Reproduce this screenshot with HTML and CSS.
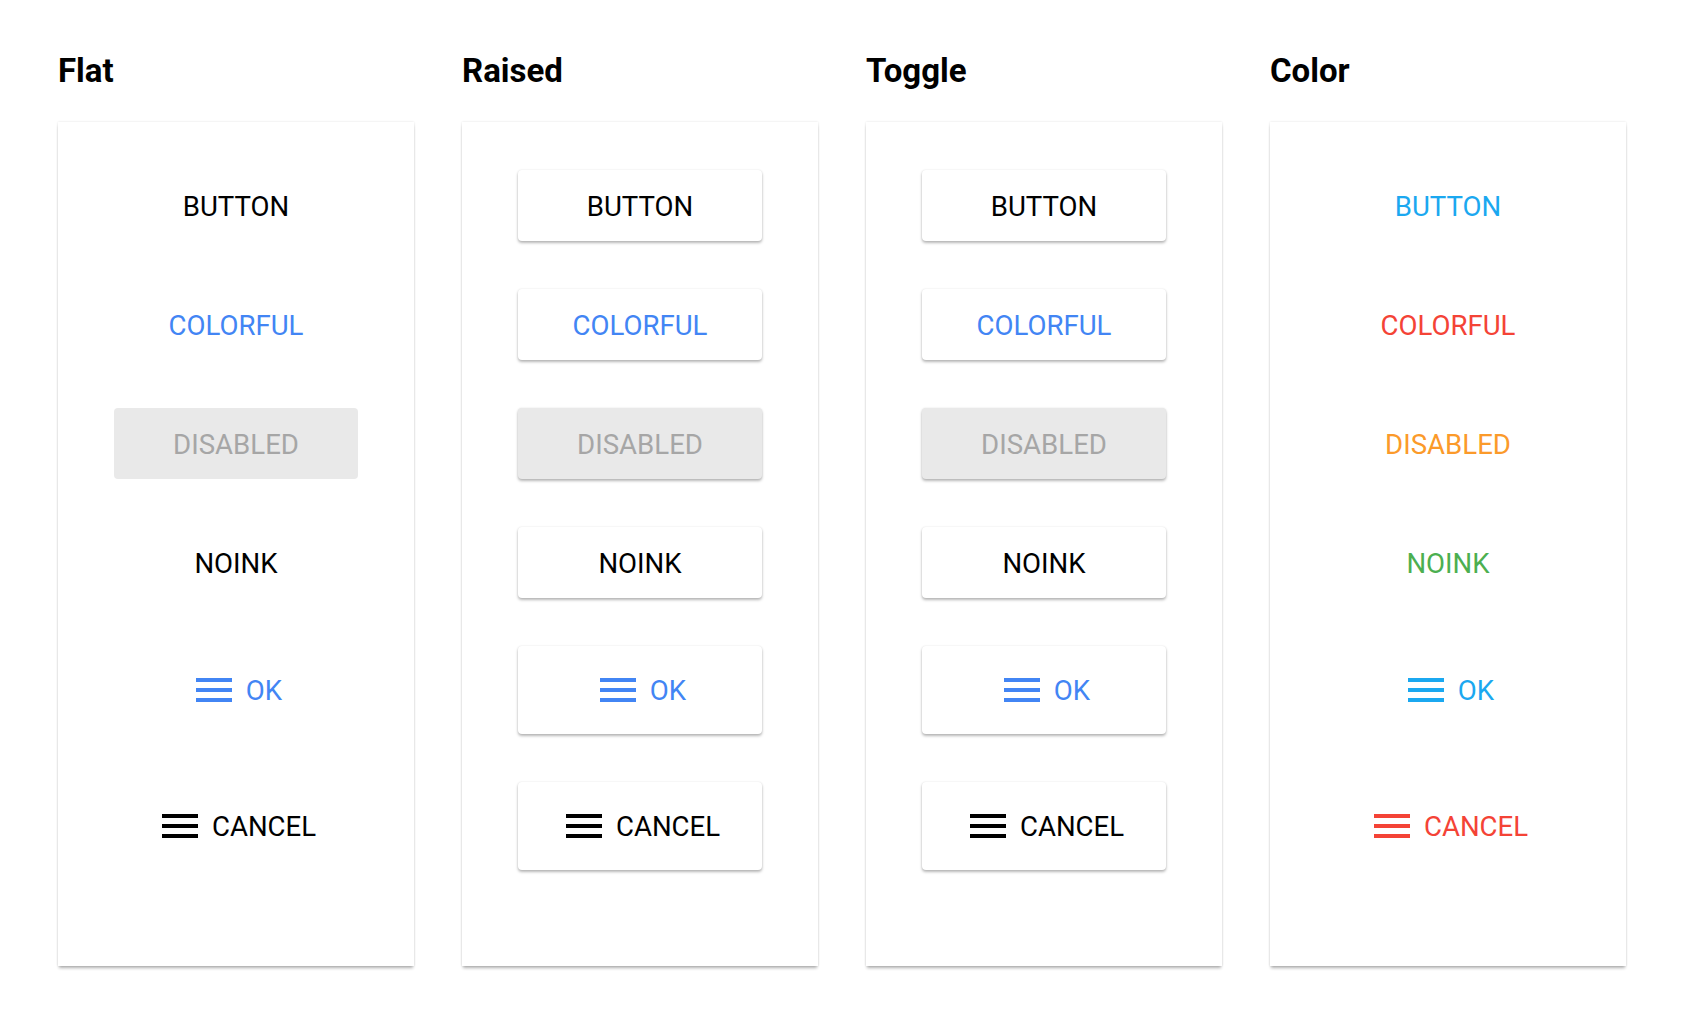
FILE: index.html
```html
<!DOCTYPE html>
<html>
<head>
<meta charset="utf-8">
<link rel="stylesheet" href="styles.css">
</head>
<body>
<svg width="0" height="0" class="defs">
  <defs>
    <symbol id="menu" viewBox="0 0 24 24"><path d="M3 18h18v-2H3v2zm0-5h18v-2H3v2zm0-7v2h18V6H3z" fill="currentColor"/></symbol>
  </defs>
</svg>
<div class="page">
  <section class="column">
    <h2 class="title">Flat</h2>
    <div class="card">
      <div class="btn flat">BUTTON</div>
      <div class="btn flat c-blue">COLORFUL</div>
      <div class="btn flat disabled">DISABLED</div>
      <div class="btn flat">NOINK</div>
      <div class="btn flat icon-btn c-blue"><svg class="icon"><use href="#menu"/></svg><span>OK</span></div>
      <div class="btn flat icon-btn"><svg class="icon"><use href="#menu"/></svg><span>CANCEL</span></div>
    </div>
  </section>
  <section class="column">
    <h2 class="title">Raised</h2>
    <div class="card">
      <div class="btn raised">BUTTON</div>
      <div class="btn raised c-blue">COLORFUL</div>
      <div class="btn raised disabled">DISABLED</div>
      <div class="btn raised">NOINK</div>
      <div class="btn raised icon-btn c-blue"><svg class="icon"><use href="#menu"/></svg><span>OK</span></div>
      <div class="btn raised icon-btn"><svg class="icon"><use href="#menu"/></svg><span>CANCEL</span></div>
    </div>
  </section>
  <section class="column">
    <h2 class="title">Toggle</h2>
    <div class="card">
      <div class="btn raised">BUTTON</div>
      <div class="btn raised c-blue">COLORFUL</div>
      <div class="btn raised disabled">DISABLED</div>
      <div class="btn raised">NOINK</div>
      <div class="btn raised icon-btn c-blue"><svg class="icon"><use href="#menu"/></svg><span>OK</span></div>
      <div class="btn raised icon-btn"><svg class="icon"><use href="#menu"/></svg><span>CANCEL</span></div>
    </div>
  </section>
  <section class="column">
    <h2 class="title">Color</h2>
    <div class="card">
      <div class="btn flat c-light">BUTTON</div>
      <div class="btn flat c-red">COLORFUL</div>
      <div class="btn flat c-orange">DISABLED</div>
      <div class="btn flat c-green">NOINK</div>
      <div class="btn flat icon-btn c-light"><svg class="icon"><use href="#menu"/></svg><span>OK</span></div>
      <div class="btn flat icon-btn c-red"><svg class="icon"><use href="#menu"/></svg><span>CANCEL</span></div>
    </div>
  </section>
</div>
</body>
</html>
```
FILE: styles.css
```css
html, body {
  margin: 0;
  padding: 0;
  background: #ffffff;
}
body {
  font-family: Roboto, "Liberation Sans", sans-serif;
  color: #000;
  min-height: 100vh;
}
.defs {
  position: absolute;
  width: 0;
  height: 0;
  overflow: hidden;
}
.page {
  display: flex;
  align-items: flex-start;
  gap: 48px;
  padding: 51px 56px 40px 58px;
}
.column {
  display: flex;
  flex-direction: column;
  width: 356px;
}
.title {
  margin: 0 0 31px 0;
  font-size: 33px;
  line-height: 40px;
  font-weight: 700;
  color: #000;
}
.card {
  background: #fff;
  height: 844px;
  box-sizing: border-box;
  padding: 48px 0 96px;
  display: flex;
  flex-direction: column;
  align-items: center;
  gap: 48px;
  box-shadow: 0 3px 3px -1px rgba(0,0,0,0.3), 0 0 2px rgba(0,0,0,0.12);
}
.btn {
  width: 244px;
  box-sizing: border-box;
  padding: 21px 0 19px;
  font-size: 27.6px;
  line-height: 31px;
  text-align: center;
  border-radius: 4px;
  color: #000;
  display: flex;
  align-items: center;
  justify-content: center;
}
.raised {
  background: #fff;
  box-shadow: 0 2px 3px rgba(0,0,0,0.28), 0 0 2px rgba(0,0,0,0.10);
}
.disabled {
  background: #e9e9e9;
  color: #a6a6a6;
}
.icon-btn {
  padding: 20px 0;
}
.icon {
  width: 48px;
  height: 48px;
  margin-right: 8px;
  flex: none;
}
.c-blue { color: #4285f4; }
.c-light { color: #1ba8f0; }
.c-red { color: #f44336; }
.c-orange { color: #fb9a2a; }
.c-green { color: #4caf50; }
```
